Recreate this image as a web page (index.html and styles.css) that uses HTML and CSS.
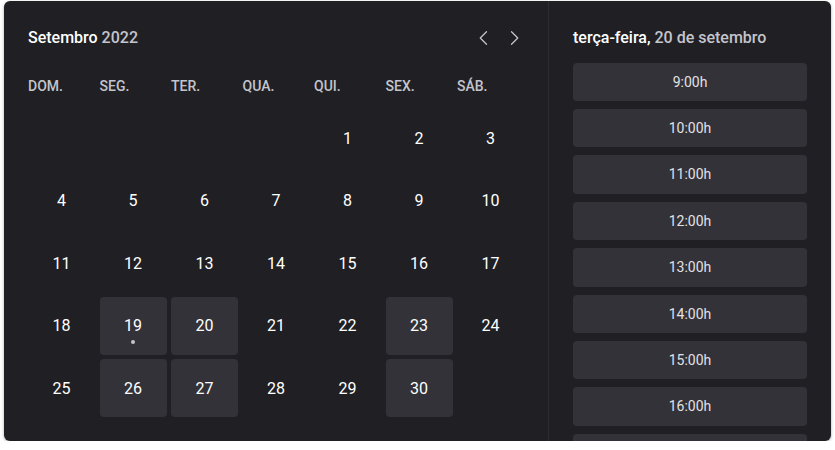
FILE: index.html
```html
<!DOCTYPE html>
<html lang="pt-BR">
<head>
<meta charset="utf-8">
<title>Agendamento</title>
<link rel="stylesheet" href="styles.css">
</head>
<body>
<div class="card">
  <section class="calendar">
    <header class="cal-header">
      <h2 class="cal-title">Setembro <span>2022</span></h2>
      <div class="cal-actions">
        <button class="nav-btn" aria-label="Mês anterior"><svg viewBox="0 0 256 256" width="20" height="20"><polyline points="160,208 80,128 160,48" fill="none" stroke="currentColor" stroke-width="16" stroke-linecap="round" stroke-linejoin="round"/></svg></button>
        <button class="nav-btn" aria-label="Próximo mês"><svg viewBox="0 0 256 256" width="20" height="20"><polyline points="96,48 176,128 96,208" fill="none" stroke="currentColor" stroke-width="16" stroke-linecap="round" stroke-linejoin="round"/></svg></button>
      </div>
    </header>
    <div class="weekdays">
      <span>DOM.</span><span>SEG.</span><span>TER.</span><span>QUA.</span><span>QUI.</span><span>SEX.</span><span>SÁB.</span>
    </div>
    <div class="days">
      <span class="day empty"></span><span class="day empty"></span><span class="day empty"></span><span class="day empty"></span>
      <span class="day">1</span><span class="day">2</span><span class="day">3</span>
      <span class="day">4</span><span class="day">5</span><span class="day">6</span><span class="day">7</span><span class="day">8</span><span class="day">9</span><span class="day">10</span>
      <span class="day">11</span><span class="day">12</span><span class="day">13</span><span class="day">14</span><span class="day">15</span><span class="day">16</span><span class="day">17</span>
      <span class="day">18</span><span class="day available today">19</span><span class="day available">20</span><span class="day">21</span><span class="day">22</span><span class="day available">23</span><span class="day">24</span>
      <span class="day">25</span><span class="day available">26</span><span class="day available">27</span><span class="day">28</span><span class="day">29</span><span class="day available">30</span><span class="day empty"></span>
    </div>
  </section>
  <aside class="times">
    <h3 class="times-header">terça-feira, <span>20 de setembro</span></h3>
    <div class="time-list">
      <button class="time">9:00h</button>
      <button class="time">10:00h</button>
      <button class="time">11:00h</button>
      <button class="time">12:00h</button>
      <button class="time">13:00h</button>
      <button class="time">14:00h</button>
      <button class="time">15:00h</button>
      <button class="time">16:00h</button>
      <button class="time">17:00h</button>
    </div>
  </aside>
</div>
</body>
</html>
```

FILE: styles.css
```css
* {
  box-sizing: border-box;
}

html, body {
  margin: 0;
  padding: 0;
  background: #ffffff;
}

body {
  font-family: Roboto, "Liberation Sans", sans-serif;
  padding: 1px 4px 0;
  -webkit-font-smoothing: antialiased;
}

.card {
  width: 827px;
  height: 440px;
  display: grid;
  grid-template-columns: 1fr 283px;
  background: #202024;
  border-radius: 6px;
  overflow: hidden;
  box-shadow: 0 1px 3px rgba(0, 0, 0, 0.35);
}

.calendar {
  padding: 24px;
  display: flex;
  flex-direction: column;
}

.cal-header {
  display: flex;
  align-items: center;
  justify-content: space-between;
  margin-bottom: 24px;
}

.cal-title {
  margin: 0;
  font-size: 16px;
  font-weight: 500;
  line-height: 25.6px;
  color: #ffffff;
}

.cal-title span {
  color: #c4c4cc;
}

.cal-actions {
  display: flex;
  gap: 10px;
  color: #c4c4cc;
}

.nav-btn {
  all: unset;
  line-height: 0;
  cursor: pointer;
  border-radius: 4px;
}

.weekdays {
  display: grid;
  grid-template-columns: repeat(7, 1fr);
  column-gap: 4.5px;
  margin-bottom: 12px;
}

.weekdays span {
  font-size: 14px;
  font-weight: 500;
  line-height: 22.4px;
  color: #c4c4cc;
}

.days {
  display: grid;
  grid-template-columns: repeat(7, 1fr);
  grid-auto-rows: 58px;
  gap: 4.5px;
}

.day {
  position: relative;
  display: flex;
  align-items: center;
  justify-content: center;
  font-size: 16px;
  color: #ffffff;
  border-radius: 4px;
}

.day.available {
  background: #323238;
}

.day.today::after {
  content: "";
  position: absolute;
  left: 50%;
  top: 43px;
  width: 4px;
  height: 4px;
  margin-left: -2px;
  border-radius: 50%;
  background: #c4c4cc;
}

.times {
  border-left: 1px solid #2c2c31;
  padding: 24px 24px 0;
  overflow: hidden;
}

.times-header {
  margin: 0;
  font-size: 16px;
  font-weight: 500;
  line-height: 25.6px;
  color: #ffffff;
}

.times-header span {
  color: #c4c4cc;
}

.time-list {
  margin-top: 12px;
  display: grid;
  grid-template-columns: 1fr;
  gap: 8px;
}

.time {
  border: 0;
  background: #323238;
  padding: 8px 0;
  color: #e1e1e6;
  border-radius: 4px;
  font-family: inherit;
  font-size: 14px;
  line-height: 22.4px;
  cursor: pointer;
}
```
